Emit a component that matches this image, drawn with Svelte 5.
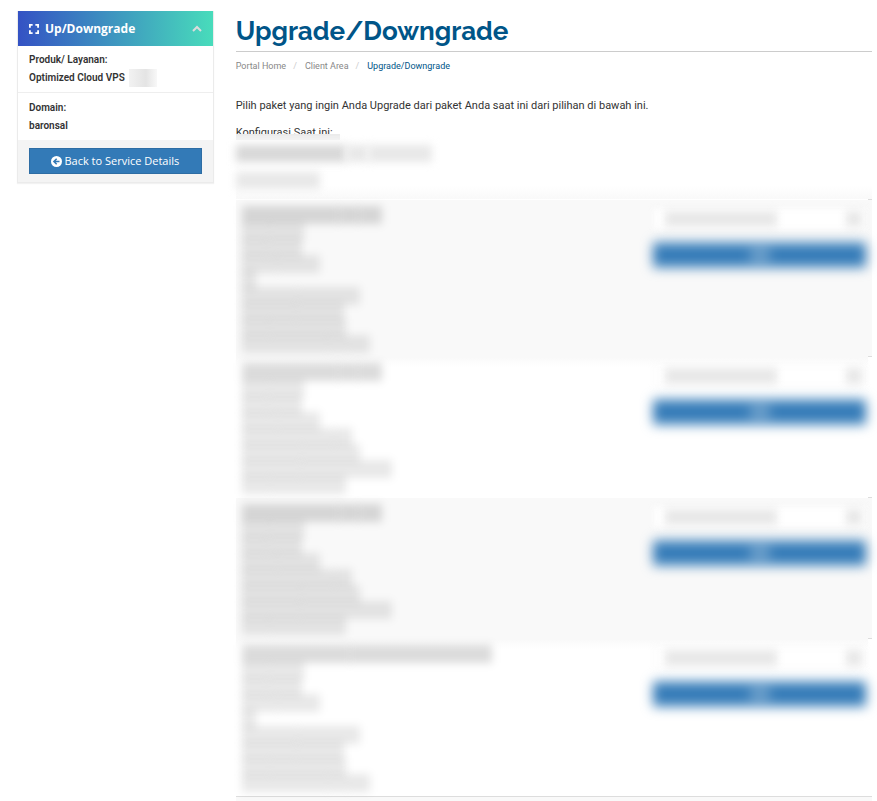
<script>
  let panelOpen = true;

  // each package is a list of lines, each line is a list of word widths
  const shortLines = [[28, 34], [24, 36], [36, 42]];

  const packages = [
    {
      lines: [
        [96, 20, 24], ...shortLines, [14],
        [56, 62], [54, 48], [28, 76], [86, 20, 22]
      ]
    },
    {
      lines: [
        [96, 20, 24], ...shortLines,
        [92, 18], [60, 58], [58, 92], [28, 76]
      ]
    },
    {
      lines: [
        [96, 20, 24], ...shortLines,
        [92, 18], [60, 58], [58, 92], [28, 76]
      ]
    },
    {
      lines: [
        [108, 142], ...shortLines, [14],
        [56, 62], [54, 48], [28, 76], [86, 20, 22]
      ]
    }
  ];

  function togglePanel() {
    panelOpen = !panelOpen;
  }
</script>

<div class="page">
  <aside class="sidebar">
    <div class="panel">
      <button class="panel-heading" aria-expanded={panelOpen} on:click={togglePanel}>
        <svg class="expand" viewBox="0 0 11 11" aria-hidden="true">
          <path d="M1 4V1h3M7 1h3v3M10 7v3H7M4 10H1V7" />
        </svg>
        <span class="panel-title">Up/Downgrade</span>
        <svg class="chevron" viewBox="0 0 10 7" aria-hidden="true">
          <path d="M1 6l4-4 4 4" />
        </svg>
      </button>
      {#if panelOpen}
        <div class="panel-item">
          <div>Produk/ Layanan:</div>
          <div class="product">Optimized Cloud VPS <span class="masked"></span></div>
        </div>
        <div class="panel-item">
          <div>Domain:</div>
          <div>baronsal</div>
        </div>
        <div class="panel-footer">
          <a class="back-btn" href="#details">
            <svg viewBox="0 0 12 12" aria-hidden="true">
              <circle cx="6" cy="6" r="6" fill="#fff" />
              <path d="M9.3 6H3.6M6.2 3L3.2 6l3 3" />
            </svg>
            Back to Service Details
          </a>
        </div>
      {/if}
    </div>
  </aside>

  <main class="content">
    <h1>Upgrade/Downgrade</h1>
    <nav>
      <ol class="breadcrumb">
        <li><a href="#home">Portal Home</a></li>
        <li><a href="#clientarea">Client Area</a></li>
        <li class="active">Upgrade/Downgrade</li>
      </ol>
    </nav>

    <p class="intro">Pilih paket yang ingin Anda Upgrade dari paket Anda saat ini dari pilihan di bawah ini.</p>

    <p class="config-title">Konfigurasi Saat ini:</p>
    <div class="config">
      <div class="smudge"></div>
      <div class="smudge-line strong">
        <i class="w-name"></i><i class="w-short"></i><i class="w-host"></i>
      </div>
      <div class="smudge-line">
        <i class="w-note"></i>
      </div>
    </div>

    <table class="packages">
      <tbody>
        {#each packages as pkg, n}
          <tr>
            <td class="info">
              {#each pkg.lines as words}
                <div class="line">
                  {#each words as width}
                    <i style="width: {width}px"></i>
                  {/each}
                </div>
              {/each}
            </td>
            <td class="order">
              <div class="cycle">
                <select id="cycle-{n}" aria-label="Billing cycle"><option></option></select>
                <i class="cycle-name"></i>
                <i class="cycle-end"></i>
              </div>
              <button class="choose" aria-label="Choose"><i></i></button>
            </td>
            <td class="edge"></td>
          </tr>
        {/each}
        <tr class="next"><td colspan="3"></td></tr>
      </tbody>
    </table>
  </main>
</div>

<style>
  :global(body) {
    margin: 0;
    background: #fff;
  }

  .page {
    display: flex;
    gap: 22px;
    padding: 11px 5px 0 17px;
    font-family: Roboto, "Liberation Sans", sans-serif;
    font-size: 11px;
    line-height: 16px;
    color: #333;
  }

  .sidebar {
    flex: 0 0 23%;
  }

  .panel {
    box-sizing: border-box;
    border: 1px solid #ebebeb;
    border-top: 0;
    box-shadow: 0 1px 1px rgba(0, 0, 0, 0.05);
  }

  .panel-heading {
    display: flex;
    align-items: center;
    gap: 6px;
    width: 100%;
    height: 35px;
    padding: 0 11px;
    border: 0;
    background: linear-gradient(90deg, #3452c4, #48dcbb);
    color: #fff;
    font-family: "Open Sans", sans-serif;
    font-size: 12px;
    font-weight: 700;
    cursor: pointer;
  }

  .panel-title {
    flex: 1;
    text-align: left;
  }

  .panel-heading svg {
    fill: none;
    stroke: #fff;
    stroke-width: 2;
  }

  .expand {
    width: 10px;
    height: 10px;
  }

  .panel-heading .chevron {
    width: 10px;
    height: 7px;
    stroke: #dcdcdc;
  }

  .panel-item {
    padding: 5px 11px;
    font-size: 10px;
    font-weight: 600;
    line-height: 18px;
  }

  .panel-item + .panel-item {
    padding-top: 6px;
    border-top: 1px solid #eee;
  }

  .product {
    display: flex;
    gap: 4px;
  }

  .masked {
    width: 28px;
    height: 18px;
    background: linear-gradient(90deg, #f2f2f2, #e4e4e4 60%, #f8f8f8);
  }

  .panel-footer {
    padding: 8px 11px;
    background: #f4f4f4;
  }

  .back-btn {
    display: flex;
    align-items: center;
    justify-content: center;
    gap: 2px;
    height: 24px;
    border: 1px solid #2e6da4;
    background: #337ab7;
    color: #fff;
    font-family: "Open Sans", sans-serif;
    font-size: 11px;
    text-decoration: none;
  }

  .back-btn svg {
    width: 11px;
    height: 11px;
  }

  .back-btn path {
    fill: none;
    stroke: #337ab7;
    stroke-width: 1.7;
  }

  .content {
    flex: 1;
    min-width: 0;
  }

  h1 {
    margin: 0;
    border-bottom: 1px solid #ccc;
    color: #058;
    font-family: Raleway, Lato, sans-serif;
    font-size: 26px;
    font-weight: 700;
    line-height: 40px;
  }

  .breadcrumb {
    display: flex;
    margin: 6px 0 24px;
    padding: 0;
    list-style: none;
    font-size: 9px;
  }

  .breadcrumb li + li::before {
    content: "/";
    padding: 0 8px 0 7px;
    color: #ccc;
  }

  .breadcrumb a {
    color: #888;
    text-decoration: none;
  }

  .breadcrumb .active {
    color: #058;
  }

  .intro {
    margin: 0 0 11px;
  }

  .config-title {
    margin: 0;
  }

  /* the covered block starts over the lower edge of the title */
  .config {
    position: relative;
    display: flex;
    flex-direction: column;
    gap: 10px;
    height: 65px;
    margin-top: -7px;
    background: linear-gradient(#fff 80%, #f9f9f9);
  }

  .smudge {
    width: 104px;
    height: 6px;
    background: linear-gradient(#eaeaea, #f6f6f6);
  }

  .smudge-line,
  .line {
    display: flex;
  }

  .smudge-line i,
  .line i {
    display: block;
    height: 17px;
    background: #e8e8e8;
    filter: blur(4px);
  }

  .smudge-line.strong {
    margin-top: -5px;
  }

  .strong .w-name {
    width: 110px;
    background: #d8d8d8;
  }

  .w-short {
    width: 22px;
  }

  .w-host {
    width: 64px;
  }

  .w-note {
    width: 84px;
  }

  .packages {
    width: 100%;
    border-collapse: collapse;
  }

  .packages td {
    padding: 0;
    vertical-align: top;
  }

  .packages tr:nth-child(odd) {
    background: #f9f9f9;
  }

  .packages tr:nth-child(even) .info,
  .packages tr:nth-child(even) .order {
    background: linear-gradient(#f9f9f9, #fff 10px);
  }

  .packages .info {
    padding: 6px;
  }

  .line {
    height: 16px;
  }

  .line:first-child {
    margin-bottom: 1px;
  }

  .line i {
    height: 18px;
    background: rgba(0, 0, 0, 0.09);
    filter: blur(4px);
  }

  .line:first-child i {
    background: rgba(0, 0, 0, 0.14);
  }

  .packages .order {
    width: 35%;
    padding: 8px 2px 0 8px;
  }

  .cycle {
    position: relative;
    margin-bottom: 12px;
  }

  select {
    display: block;
    width: 100%;
    height: 22px;
    border: 1px solid #f4f4f4;
    background: #fff;
    appearance: none;
    filter: blur(3px);
  }

  .cycle i {
    position: absolute;
    top: 3px;
    height: 16px;
    background: #e8e8e8;
    filter: blur(4px);
    pointer-events: none;
  }

  .cycle-name {
    left: 12px;
    width: 112px;
  }

  .cycle-end {
    right: 4px;
    width: 16px;
  }

  .choose {
    display: flex;
    align-items: center;
    justify-content: center;
    width: 100%;
    height: 26px;
    border: 0;
    background: linear-gradient(#5b95c6, #337ab7 30%, #337ab7 70%, #5b95c6);
    filter: blur(6px);
  }

  .choose i {
    width: 20px;
    height: 12px;
    background: rgba(255, 255, 255, 0.3);
  }

  .packages .edge {
    width: 4px;
    border-top: 1px solid #ddd;
  }

  .packages .next td {
    height: 5px;
    border-top: 1px solid #ddd;
  }
</style>
